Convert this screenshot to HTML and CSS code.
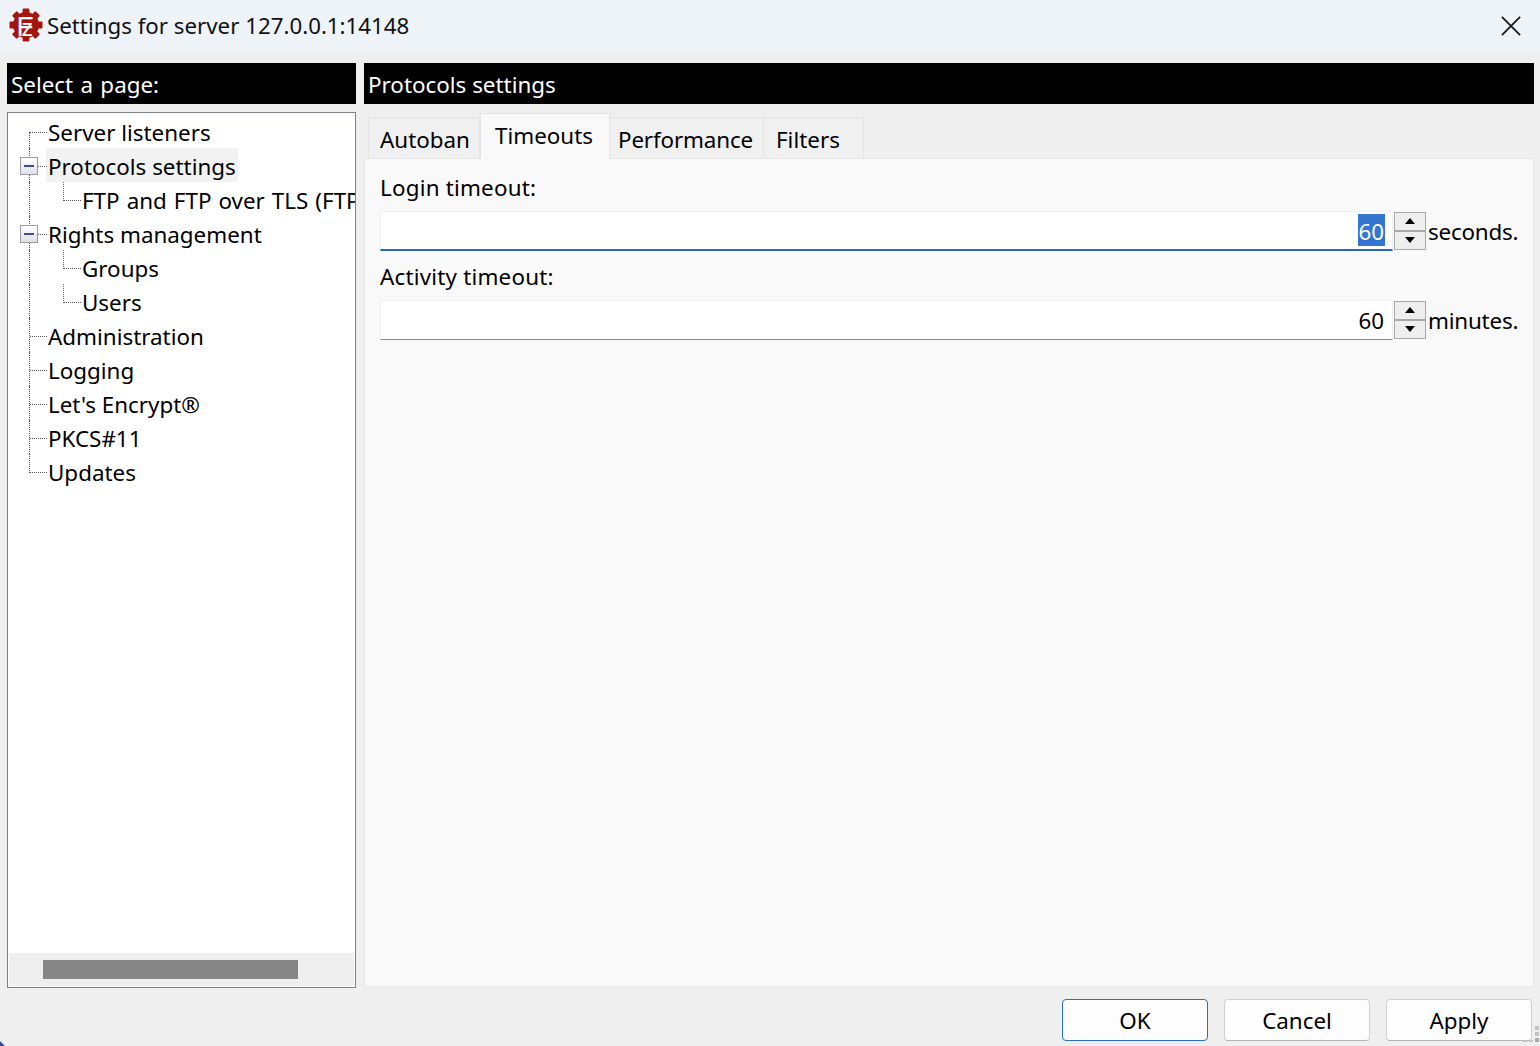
FILE: index.html
```html
<!DOCTYPE html>
<html lang="en">
<head>
<meta charset="utf-8">
<title>Settings for server 127.0.0.1:14148</title>
<link rel="stylesheet" href="styles.css">
</head>
<body>
<div class="window">
  <header class="titlebar">
    <svg class="logo" viewBox="0 0 34 34" aria-hidden="true">
      <g fill="#a5150f">
        <circle cx="17" cy="17" r="13"/>
        <rect x="13.6" y="0.5" width="6.8" height="33" rx="1"/>
        <rect x="13.6" y="0.5" width="6.8" height="33" rx="1" transform="rotate(45 17 17)"/>
        <rect x="13.6" y="0.5" width="6.8" height="33" rx="1" transform="rotate(90 17 17)"/>
        <rect x="13.6" y="0.5" width="6.8" height="33" rx="1" transform="rotate(135 17 17)"/>
      </g>
      <text class="logo-text" x="7.5" y="28">F<tspan class="logo-z" x="12.5" y="28">z</tspan></text>
    </svg>
    <span class="title">Settings for server 127.0.0.1:14148</span>
    <svg class="close" viewBox="0 0 22 22" aria-hidden="true"><path d="M1 1 L21 21 M21 1 L1 21"/></svg>
  </header>

  <main class="content">
    <section class="sidebar">
      <h2 class="pagehead head-select">Select a page:</h2>
      <div class="treebox">
        <ul class="tree">
          <li class="row first">Server listeners</li>
          <li class="row open selected"><span class="expander"></span><span class="label">Protocols settings</span></li>
          <li class="row sub">FTP and FTP over TLS (FTPS)</li>
          <li class="row open"><span class="expander"></span><span class="label">Rights management</span></li>
          <li class="row sub">Groups</li>
          <li class="row sub">Users</li>
          <li class="row">Administration</li>
          <li class="row">Logging</li>
          <li class="row">Let's Encrypt®</li>
          <li class="row">PKCS#11</li>
          <li class="row last">Updates</li>
        </ul>
        <div class="hscroll"><div class="thumb"></div></div>
      </div>
    </section>

    <section class="page">
      <h2 class="pagehead">Protocols settings</h2>
      <div class="tabs">
        <div class="tab tab-autoban">Autoban</div>
        <div class="tab tab-timeouts">Timeouts</div>
        <div class="tab tab-performance">Performance</div>
        <div class="tab tab-filters">Filters</div>
      </div>
      <div class="panel">
        <label class="fieldlabel">Login timeout:</label>
        <div class="field first-field">
          <div class="input focused"><span class="selected-value">60</span></div>
          <div class="spin">
            <button class="spinbtn up" type="button"></button>
            <button class="spinbtn down" type="button"></button>
          </div>
          <span class="unit">seconds.</span>
        </div>
        <label class="fieldlabel second">Activity timeout:</label>
        <div class="field">
          <div class="input"><span class="value">60</span></div>
          <div class="spin">
            <button class="spinbtn up" type="button"></button>
            <button class="spinbtn down" type="button"></button>
          </div>
          <span class="unit">minutes.</span>
        </div>
      </div>
    </section>
  </main>

  <footer class="footer">
    <button class="btn default" type="button">OK</button>
    <button class="btn" type="button">Cancel</button>
    <button class="btn" type="button">Apply</button>
    <svg class="grip" viewBox="0 0 18 18" aria-hidden="true">
      <g fill="#c4c4c4">
        <rect x="13" y="0" width="4" height="4"/>
        <rect x="13" y="6" width="4" height="4"/>
        <rect x="13" y="12" width="4" height="4" fill="#ababab"/>
        <rect x="1" y="14" width="4" height="2"/>
        <rect x="7" y="14" width="4" height="2"/>
      </g>
    </svg>
    <span class="corner"></span>
  </footer>
</div>
</body>
</html>
```

FILE: styles.css
```css
* { box-sizing: border-box; }
html, body { margin: 0; padding: 0; }
body {
  width: 1540px;
  height: 1046px;
  overflow: hidden;
  background: #efefef;
  color: #000;
  font-family: "Noto Sans", "Open Sans", sans-serif;
  font-size: 22.4px;
}
.window { display: flex; flex-direction: column; height: 1046px; position: relative; }

.titlebar {
  height: 53px;
  background: #eef3f8;
  display: flex;
  align-items: center;
  padding: 0 18px 4px 9px;
  flex: none;
}
.logo { width: 34px; height: 34px; flex: none; margin-right: 4px; }
.logo-text { font: 400 28px "Liberation Sans", sans-serif; fill: #fff; }
.logo-z { font-size: 23px; }
.title { flex: 1; color: #111; font-size: 22.3px; line-height: 32px; padding-top: 2px; }
.close { width: 20px; height: 20px; flex: none; margin-top: 2px; margin-right: 1px; }
.close path { stroke: #1a1a1a; stroke-width: 2; fill: none; }

.content {
  display: flex;
  gap: 8px;
  padding: 10px 6px 0 7px;
  height: 935px;
  flex: none;
}
.sidebar { width: 349px; display: flex; flex-direction: column; flex: none; }
.page { flex: 1; display: flex; flex-direction: column; min-width: 0; }
.pagehead {
  margin: 0;
  height: 41px;
  line-height: 43px;
  background: #000;
  color: #fff;
  font-size: 22.4px;
  font-weight: 400;
  padding-left: 4px;
  flex: none;
}
.head-select { word-spacing: 1.5px; }

.treebox {
  margin-top: 8px;
  height: 876px;
  background: #fff;
  border: 1px solid #7f7f86;
  display: flex;
  flex-direction: column;
  overflow: hidden;
}
.tree { list-style: none; margin: 0; padding: 1px 0 0; flex: 1; min-height: 0; }
.row {
  height: 34px;
  line-height: 38px;
  padding-left: 40px;
  position: relative;
  white-space: nowrap;
}
.row.sub {
  padding-left: 74px;
  word-spacing: 1.2px;
  background: repeating-linear-gradient(#666 0 1px, transparent 1px 2px) 55px 0 / 1px 19px no-repeat;
}
.row::before {
  content: "";
  position: absolute;
  left: 22px;
  top: 18px;
  width: 17px;
  border-top: 1px dotted #555;
}
.row::after {
  content: "";
  position: absolute;
  left: 21px;
  top: 0;
  height: 34px;
  border-left: 1px dotted #555;
}
.row.first::after { top: 18px; height: 16px; }
.row.last::after { height: 19px; }
.row.sub::before { left: 56px; width: 17px; }
.label { display: inline-block; height: 34px; padding: 0 2px; margin-left: -2px; }
.selected .label { background: #f2f2f2; }
.expander {
  position: absolute;
  left: 12px;
  top: 9px;
  width: 18px;
  height: 18px;
  border: 1px solid #9c9ca2;
  background: linear-gradient(#fff, #dfe0e6);
  z-index: 1;
}
.expander::after {
  content: "";
  position: absolute;
  left: 3px;
  top: 7px;
  width: 10px;
  height: 2px;
  background: #3b4d9a;
}
.hscroll {
  height: 33px;
  margin: 0 1px 1px;
  background: #efefef;
  padding: 7px 0 0 34px;
  flex: none;
}
.thumb { width: 255px; height: 19px; background: #868686; }

.tabs { height: 55px; display: flex; align-items: flex-end; padding-left: 4px; margin-top: -1px; position: relative; z-index: 1; flex: none; }
.tab {
  height: 41px;
  line-height: 44px;
  background: #f0f0f0;
  border: 1px solid #e4e4e4;
  border-bottom: 0;
  border-left-width: 0;
}
.tab-autoban { width: 112px; border-left-width: 1px; padding-left: 11px; }
.tab-timeouts { width: 130px; height: 46px; line-height: 44px; background: #f9f9f9; margin-bottom: -1px; border-left-width: 1px; padding-left: 14px; }
.tab-performance { width: 154px; padding-left: 8px; letter-spacing: -0.15px; }
.tab-filters { width: 100px; padding-left: 12px; }

.panel {
  flex: none;
  height: 829px;
  background: #f9f9f9;
  border: 1px solid #e8e8e8;
  padding: 14px 12px 0 15px;
}
.fieldlabel { display: block; height: 30px; line-height: 30px; letter-spacing: 0.2px; }
.fieldlabel.second { margin-top: 11px; }
.field { display: flex; align-items: flex-start; height: 40px; margin-top: 8px; }
.input {
  width: 1013px;
  height: 100%;
  background: #fff;
  border: 1px solid #f0f0f0;
  border-bottom: 1px solid #8a8a8a;
  text-align: right;
  line-height: 39px;
  padding-right: 8px;
  flex: none;
}
.input.focused { border-bottom: 2px solid #2a67b8; }
.selected-value {
  display: inline-block;
  height: 32px;
  line-height: 35px;
  vertical-align: top;
  margin-top: 2px;
  background: #3375d0;
  color: #fff;
  padding: 0 1px 0 0;
  margin-right: -1px;
}
.spin {
  width: 32px;
  height: 38px;
  margin: 1px 0 0 1px;
  display: flex;
  flex-direction: column;
  flex: none;
}
.spinbtn {
  flex: 1;
  padding: 0;
  background: #efefef;
  border: 1px solid #a8a8a8;
  position: relative;
}
.spinbtn::after {
  content: "";
  position: absolute;
  left: 10px;
  top: 5px;
  border-left: 5px solid transparent;
  border-right: 5px solid transparent;
}
.spinbtn.up::after { border-bottom: 6px solid #000; }
.spinbtn.down::after { border-top: 6px solid #000; }
.unit { margin-left: 2px; white-space: nowrap; line-height: 42px; letter-spacing: -0.2px; }

.footer {
  flex: 1;
  display: flex;
  justify-content: flex-end;
  gap: 16px;
  padding: 11px 8px 0 0;
  position: relative;
}
.btn {
  width: 146px;
  height: 42px;
  background: #fdfdfd;
  border: 1px solid #d0d0d0;
  border-bottom-color: #b4b4b4;
  border-radius: 4px;
  font: inherit;
  color: #000;
  padding: 0;
}
.btn.default { border-color: #2a6fc4; }
.grip { position: absolute; right: 0; bottom: 2px; width: 18px; height: 18px; }
.corner {
  position: absolute;
  left: 0;
  bottom: 0;
  width: 5px;
  height: 5px;
  background: #2f4f9a;
  clip-path: polygon(0 0, 100% 100%, 0 100%);
}
```
